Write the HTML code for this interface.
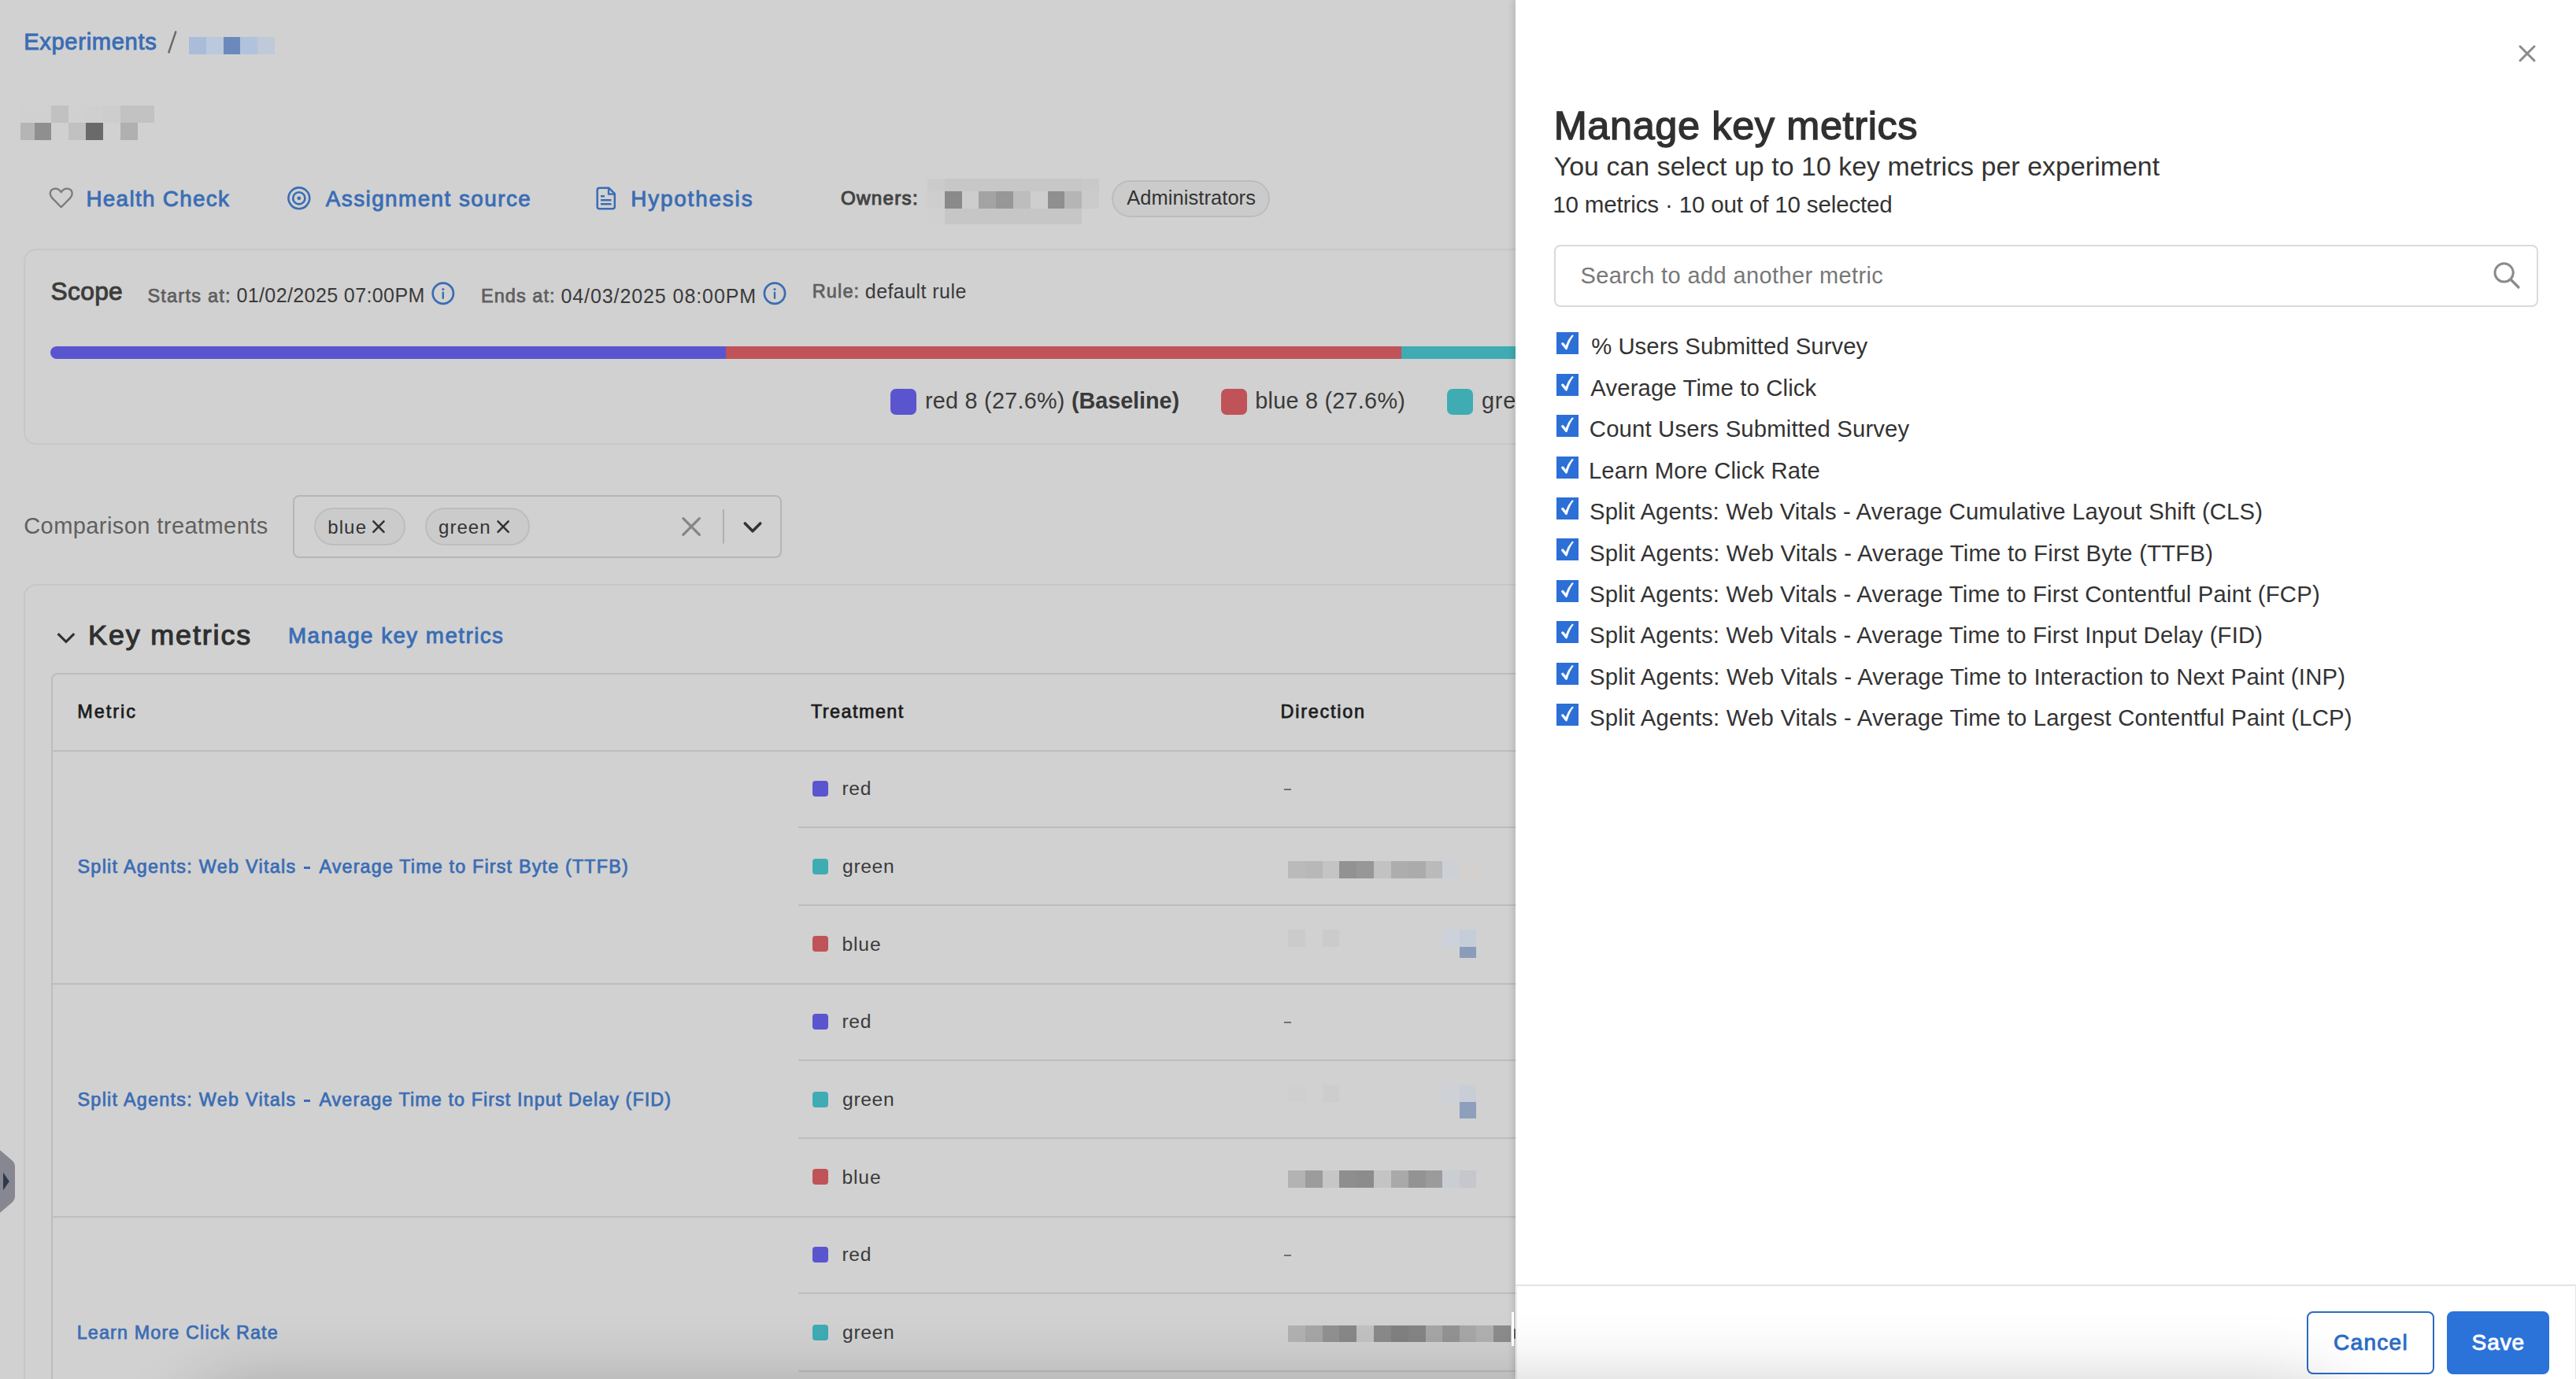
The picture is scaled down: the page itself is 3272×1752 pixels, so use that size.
<!DOCTYPE html><html><head><meta charset="utf-8"><style>
html,body{margin:0;padding:0;}
body{width:3272px;height:1752px;position:relative;overflow:hidden;background:#d1d1d1;font-family:"Liberation Sans",sans-serif;}
.t{position:absolute;white-space:nowrap;}
.b{position:absolute;box-sizing:border-box;}
svg{position:absolute;overflow:visible;}
</style></head><body>
<div class="t " style="left:30.14px;top:38.60px;font-size:29.1px;line-height:29.1px;font-weight:normal;color:#3a6db5;letter-spacing:0.702px;-webkit-text-stroke:0.93px #3a6db5;">Experiments</div>
<svg style="left:0;top:0" width="1" height="1"><line x1="223.2" y1="40.5" x2="214.4" y2="66.5" stroke="#6a6a6a" stroke-width="2.4" stroke-linecap="round"/></svg>
<div class="b" style="left:240px;top:47px;width:21.8px;height:21.6px;background:#a9bcda"></div>
<div class="b" style="left:261.8px;top:47px;width:21.8px;height:21.6px;background:#bbc9dd"></div>
<div class="b" style="left:283.6px;top:47px;width:21.8px;height:21.6px;background:#6b8abb"></div>
<div class="b" style="left:305.4px;top:47px;width:21.8px;height:21.6px;background:#b1c2de"></div>
<div class="b" style="left:327.2px;top:47px;width:21.8px;height:21.6px;background:#c0c9d7"></div>
<div class="b" style="left:26px;top:134px;width:39px;height:22px;background:#d0d0d0"></div>
<div class="b" style="left:65px;top:134px;width:22px;height:22px;background:#c1c1c1"></div>
<div class="b" style="left:87px;top:134px;width:22px;height:22px;background:#d0d0d0"></div>
<div class="b" style="left:109px;top:134px;width:22px;height:22px;background:#cfcfcf"></div>
<div class="b" style="left:131px;top:134px;width:22px;height:22px;background:#cdcdcd"></div>
<div class="b" style="left:153px;top:134px;width:22px;height:22px;background:#c2c2c2"></div>
<div class="b" style="left:175px;top:134px;width:21px;height:22px;background:#c2c2c2"></div>
<div class="b" style="left:26px;top:156px;width:18px;height:22px;background:#b5b5b5"></div>
<div class="b" style="left:44px;top:156px;width:21px;height:22px;background:#8f8f8f"></div>
<div class="b" style="left:65px;top:156px;width:22px;height:22px;background:#d0d0d0"></div>
<div class="b" style="left:87px;top:156px;width:22px;height:22px;background:#c1c1c1"></div>
<div class="b" style="left:109px;top:156px;width:22px;height:22px;background:#6a6a6a"></div>
<div class="b" style="left:131px;top:156px;width:22px;height:22px;background:#d1d1d1"></div>
<div class="b" style="left:153px;top:156px;width:22px;height:22px;background:#b0b0b0"></div>
<div class="b" style="left:175px;top:156px;width:21px;height:22px;background:#d1d1d1"></div>
<svg style="left:0;top:0" width="1" height="1"><path d="M77.7 263.2 L66.3 251.6 C62.2 247.4 63.2 241.2 68.6 239.9 C72.3 239 75.6 241.2 77.7 244.2 C79.8 241.2 83.1 239 86.8 239.9 C92.2 241.2 93.2 247.4 89.1 251.6 Z" fill="none" stroke="#7b7b7b" stroke-width="2.3" stroke-linejoin="round"/></svg>
<div class="t " style="left:109.42px;top:238.59px;font-size:27.8px;line-height:27.8px;font-weight:normal;color:#3a6db5;letter-spacing:1.327px;-webkit-text-stroke:0.89px #3a6db5;">Health Check</div>
<svg style="left:0;top:0" width="1" height="1"><circle cx="379.8" cy="251.8" r="13.4" fill="none" stroke="#3a6db5" stroke-width="2.6"/><circle cx="379.8" cy="251.8" r="7.6" fill="none" stroke="#3a6db5" stroke-width="2.6"/><circle cx="379.8" cy="251.8" r="2.4" fill="#3a6db5"/></svg>
<div class="t " style="left:413.75px;top:239.39px;font-size:27.8px;line-height:27.8px;font-weight:normal;color:#3a6db5;letter-spacing:1.476px;-webkit-text-stroke:0.89px #3a6db5;">Assignment source</div>
<svg style="left:0;top:0" width="1" height="1"><path d="M761.5 238.8 H773.5 L780.8 246.1 V262.5 Q780.8 265.3 778 265.3 H761.5 Q758.7 265.3 758.7 262.5 V241.6 Q758.7 238.8 761.5 238.8 Z" fill="none" stroke="#3a6db5" stroke-width="2.5" stroke-linejoin="round"/><path d="M773 239 V246.6 H780.6" fill="none" stroke="#3a6db5" stroke-width="2.3"/><path d="M763 249.2 H768 M763 254.2 H776.5 M763 259.2 H776.5" stroke="#3a6db5" stroke-width="2.4"/></svg>
<div class="t " style="left:801.22px;top:239.39px;font-size:27.8px;line-height:27.8px;font-weight:normal;color:#3a6db5;letter-spacing:1.871px;-webkit-text-stroke:0.89px #3a6db5;">Hypothesis</div>
<div class="t " style="left:1068.04px;top:239.79px;font-size:24.2px;line-height:24.2px;font-weight:normal;color:#444;letter-spacing:1.266px;-webkit-text-stroke:1.05px #444;">Owners:</div>
<div class="b" style="left:1178px;top:227px;width:22px;height:16px;background:#cbcbcb"></div>
<div class="b" style="left:1200px;top:227px;width:22px;height:16px;background:#c7c7c7"></div>
<div class="b" style="left:1222px;top:227px;width:21px;height:16px;background:#c7c7c7"></div>
<div class="b" style="left:1243px;top:227px;width:22px;height:16px;background:#c7c7c7"></div>
<div class="b" style="left:1265px;top:227px;width:22px;height:16px;background:#c7c7c7"></div>
<div class="b" style="left:1287px;top:227px;width:22px;height:16px;background:#c7c7c7"></div>
<div class="b" style="left:1309px;top:227px;width:22px;height:16px;background:#c7c7c7"></div>
<div class="b" style="left:1331px;top:227px;width:21px;height:16px;background:#c7c7c7"></div>
<div class="b" style="left:1352px;top:227px;width:22px;height:16px;background:#c7c7c7"></div>
<div class="b" style="left:1374px;top:227px;width:22px;height:16px;background:#c9c9c9"></div>
<div class="b" style="left:1178px;top:243px;width:22px;height:22px;background:#cecece"></div>
<div class="b" style="left:1200px;top:243px;width:22px;height:22px;background:#8a8a8a"></div>
<div class="b" style="left:1222px;top:243px;width:21px;height:22px;background:#cdcdcd"></div>
<div class="b" style="left:1243px;top:243px;width:22px;height:22px;background:#a3a3a3"></div>
<div class="b" style="left:1265px;top:243px;width:22px;height:22px;background:#979797"></div>
<div class="b" style="left:1287px;top:243px;width:22px;height:22px;background:#bdbdbd"></div>
<div class="b" style="left:1309px;top:243px;width:22px;height:22px;background:#cecece"></div>
<div class="b" style="left:1331px;top:243px;width:21px;height:22px;background:#8f8f8f"></div>
<div class="b" style="left:1352px;top:243px;width:22px;height:22px;background:#b5b5b5"></div>
<div class="b" style="left:1374px;top:243px;width:22px;height:22px;background:#cbcbcb"></div>
<div class="b" style="left:1178px;top:265px;width:22px;height:20px;background:#d0d0d0"></div>
<div class="b" style="left:1200px;top:265px;width:22px;height:20px;background:#c6c6c6"></div>
<div class="b" style="left:1222px;top:265px;width:21px;height:20px;background:#c6c6c6"></div>
<div class="b" style="left:1243px;top:265px;width:22px;height:20px;background:#c6c6c6"></div>
<div class="b" style="left:1265px;top:265px;width:22px;height:20px;background:#c6c6c6"></div>
<div class="b" style="left:1287px;top:265px;width:22px;height:20px;background:#c6c6c6"></div>
<div class="b" style="left:1309px;top:265px;width:22px;height:20px;background:#c6c6c6"></div>
<div class="b" style="left:1331px;top:265px;width:21px;height:20px;background:#c6c6c6"></div>
<div class="b" style="left:1352px;top:265px;width:22px;height:20px;background:#c6c6c6"></div>
<div class="b" style="left:1412px;top:228.5px;width:201px;height:47px;border:2px solid #bcbcbc;border-radius:24px;background:#cbcbcb"></div>
<div class="t " style="left:1431.30px;top:238.79px;font-size:25.4px;line-height:25.4px;font-weight:normal;color:#333;letter-spacing:0.099px;">Administrators</div>
<div class="b" style="left:30px;top:316px;width:2200px;height:249px;border:2px solid #c7c7c7;border-radius:16px"></div>
<div class="t " style="left:64.58px;top:355.23px;font-size:31.7px;line-height:31.7px;font-weight:normal;color:#3c3c3c;letter-spacing:0.318px;-webkit-text-stroke:1.01px #3c3c3c;">Scope</div>
<div class="t " style="left:187.42px;top:364.88px;font-size:23.5px;line-height:23.5px;font-weight:normal;color:#5f5f5f;letter-spacing:1.225px;-webkit-text-stroke:0.75px #5f5f5f;">Starts at:</div>
<div class="t " style="left:300.40px;top:363.43px;font-size:25px;line-height:25px;font-weight:normal;color:#3a3a3a;letter-spacing:0.400px;">01/02/2025 07:00PM</div>
<svg style="left:0;top:0" width="1" height="1"><circle cx="562.8" cy="372.8" r="13.1" fill="none" stroke="#3a6db3" stroke-width="2.7"/><circle cx="562.8" cy="367.5" r="1.5" fill="#3a6db3"/><path d="M562.8 371.6 V378.8" stroke="#3a6db3" stroke-width="2.4" stroke-linecap="round"/></svg>
<div class="t " style="left:611.00px;top:364.88px;font-size:23.5px;line-height:23.5px;font-weight:normal;color:#5f5f5f;letter-spacing:1.045px;-webkit-text-stroke:0.75px #5f5f5f;">Ends at:</div>
<div class="t " style="left:712.40px;top:363.73px;font-size:25px;line-height:25px;font-weight:normal;color:#3a3a3a;letter-spacing:0.918px;">04/03/2025 08:00PM</div>
<svg style="left:0;top:0" width="1" height="1"><circle cx="984" cy="372.8" r="13.1" fill="none" stroke="#3a6db3" stroke-width="2.7"/><circle cx="984" cy="367.5" r="1.5" fill="#3a6db3"/><path d="M984 371.6 V378.8" stroke="#3a6db3" stroke-width="2.4" stroke-linecap="round"/></svg>
<div class="t " style="left:1031.69px;top:359.18px;font-size:23.5px;line-height:23.5px;font-weight:normal;color:#5f5f5f;letter-spacing:1.147px;-webkit-text-stroke:0.75px #5f5f5f;">Rule:</div>
<div class="t " style="left:1098.80px;top:357.93px;font-size:25px;line-height:25px;font-weight:normal;color:#3a3a3a;letter-spacing:0.436px;">default rule</div>
<div class="b" style="left:64px;top:440px;width:860px;height:16px;background:#5a55cf;border-radius:8px 0 0 8px"></div>
<div class="b" style="left:922px;top:440px;width:858px;height:16px;background:#bf5357"></div>
<div class="b" style="left:1780px;top:440px;width:500px;height:16px;background:#3facb4"></div>
<div class="b" style="left:1130.5px;top:494px;width:33px;height:33px;background:#5a55cf;border-radius:7px"></div>
<div class="t " style="left:1174.93px;top:494.75px;font-size:28.8px;line-height:28.8px;font-weight:normal;color:#3a3a3a;letter-spacing:0.251px;">red 8 (27.6%)</div>
<div class="t " style="left:1361.06px;top:494.75px;font-size:28.8px;line-height:28.8px;font-weight:bold;color:#3a3a3a;letter-spacing:-0.076px;">(Baseline)</div>
<div class="b" style="left:1550.5px;top:494px;width:33px;height:33px;background:#bf5357;border-radius:7px"></div>
<div class="t " style="left:1594.33px;top:494.75px;font-size:28.8px;line-height:28.8px;font-weight:normal;color:#3a3a3a;letter-spacing:0.246px;">blue 8 (27.6%)</div>
<div class="b" style="left:1838px;top:494px;width:33px;height:33px;background:#3facb4;border-radius:7px"></div>
<div class="t " style="left:1882.05px;top:494.75px;font-size:28.8px;line-height:28.8px;font-weight:normal;color:#3a3a3a;letter-spacing:0.742px;">green 8 (27.6%)</div>
<div class="t " style="left:30.25px;top:654.38px;font-size:29px;line-height:29px;font-weight:normal;color:#606060;letter-spacing:0.426px;">Comparison treatments</div>
<div class="b" style="left:372px;top:629px;width:621px;height:79.5px;border:2px solid #b6b6b6;border-radius:8px"></div>
<div class="b" style="left:398.5px;top:645px;width:116.5px;height:48px;border:2px solid #bdbdbd;border-radius:24px;background:#cbcbcb"></div>
<div class="t " style="left:416.14px;top:657.76px;font-size:24px;line-height:24px;font-weight:normal;color:#333;letter-spacing:1.160px;">blue</div>
<svg style="left:0;top:0" width="1" height="1"><path d="M474.3 662.4 L487.5 675.8 M487.5 662.4 L474.3 675.8" stroke="#333" stroke-width="2.6" stroke-linecap="round"/></svg>
<div class="b" style="left:539.5px;top:645px;width:133.5px;height:48px;border:2px solid #bdbdbd;border-radius:24px;background:#cbcbcb"></div>
<div class="t " style="left:557.04px;top:657.76px;font-size:24px;line-height:24px;font-weight:normal;color:#333;letter-spacing:1.050px;">green</div>
<svg style="left:0;top:0" width="1" height="1"><path d="M632.5 662.4 L645.7 675.8 M645.7 662.4 L632.5 675.8" stroke="#333" stroke-width="2.6" stroke-linecap="round"/></svg>
<svg style="left:0;top:0" width="1" height="1"><path d="M867.8 658.7 L888.4 679.3 M888.4 658.7 L867.8 679.3" stroke="#858585" stroke-width="3.2" stroke-linecap="round"/><path d="M918.9 647 V690.5" stroke="#ababab" stroke-width="1.8"/><path d="M946.3 665 L956 674.8 L965.7 665" fill="none" stroke="#333" stroke-width="3.6" stroke-linecap="round" stroke-linejoin="round"/></svg>
<div class="b" style="left:30px;top:742px;width:2400px;height:1200px;border:2px solid #c7c7c7;border-radius:16px"></div>
<svg style="left:0;top:0" width="1" height="1"><path d="M73.6 805.2 L83.9 815.3 L94.2 805.2" fill="none" stroke="#303030" stroke-width="3.2" stroke-linecap="butt" stroke-linejoin="miter"/></svg>
<div class="t " style="left:112.10px;top:790.02px;font-size:35.9px;line-height:35.9px;font-weight:normal;color:#2f2f2f;letter-spacing:1.860px;-webkit-text-stroke:1.15px #2f2f2f;">Key metrics</div>
<div class="t " style="left:366.03px;top:793.87px;font-size:27.7px;line-height:27.7px;font-weight:normal;color:#3a6db5;letter-spacing:1.481px;-webkit-text-stroke:0.89px #3a6db5;">Manage key metrics</div>
<div class="b" style="left:64.5px;top:855px;width:2300px;height:1000px;border:2px solid #bdbdbd;border-radius:8px"></div>
<div class="t " style="left:98.20px;top:893.06px;font-size:23.4px;line-height:23.4px;font-weight:normal;color:#1c1c1c;letter-spacing:2.032px;-webkit-text-stroke:0.75px #1c1c1c;">Metric</div>
<div class="t " style="left:1029.91px;top:893.26px;font-size:23.4px;line-height:23.4px;font-weight:normal;color:#1c1c1c;letter-spacing:1.460px;-webkit-text-stroke:0.75px #1c1c1c;">Treatment</div>
<div class="t " style="left:1626.50px;top:893.26px;font-size:23.4px;line-height:23.4px;font-weight:normal;color:#1c1c1c;letter-spacing:1.791px;-webkit-text-stroke:0.75px #1c1c1c;">Direction</div>
<div class="b" style="left:66px;top:953px;width:2300px;height:2px;background:#bdbdbd"></div>
<div class="t " style="left:98.53px;top:1090.24px;font-size:23.3px;line-height:23.3px;font-weight:normal;color:#3a6db5;letter-spacing:1.309px;-webkit-text-stroke:0.75px #3a6db5;">Split Agents: Web Vitals</div>
<div class="b" style="left:385.8px;top:1101.2px;width:8px;height:2.6px;background:#3a6db5"></div>
<div class="t " style="left:405.38px;top:1090.24px;font-size:23.3px;line-height:23.3px;font-weight:normal;color:#3a6db5;letter-spacing:1.187px;-webkit-text-stroke:0.75px #3a6db5;">Average Time to First Byte (TTFB)</div>
<div class="b" style="left:1032px;top:992.0px;width:20px;height:20px;background:#5a55cf;border-radius:4px"></div>
<div class="t " style="left:1069.40px;top:990.46px;font-size:24.6px;line-height:24.6px;font-weight:normal;color:#3a3a3a;letter-spacing:0.775px;">red</div>
<div class="b" style="left:1631px;top:1002.0px;width:8.6px;height:2.2px;background:#707070"></div>
<div class="b" style="left:1014px;top:1050.2px;width:1300px;height:2px;background:#bdbdbd"></div>
<div class="b" style="left:1032px;top:1090.7px;width:20px;height:20px;background:#3facb4;border-radius:4px"></div>
<div class="t " style="left:1070.02px;top:1089.16px;font-size:24.6px;line-height:24.6px;font-weight:normal;color:#3a3a3a;letter-spacing:0.682px;">green</div>
<div class="b" style="left:1014px;top:1149px;width:1300px;height:2px;background:#bdbdbd"></div>
<div class="b" style="left:1032px;top:1189.4px;width:20px;height:20px;background:#bf5357;border-radius:4px"></div>
<div class="t " style="left:1069.40px;top:1187.86px;font-size:24.6px;line-height:24.6px;font-weight:normal;color:#3a3a3a;letter-spacing:0.904px;">blue</div>
<div class="b" style="left:66px;top:1249px;width:2300px;height:2px;background:#bdbdbd"></div>
<div class="t " style="left:98.53px;top:1386.24px;font-size:23.3px;line-height:23.3px;font-weight:normal;color:#3a6db5;letter-spacing:1.309px;-webkit-text-stroke:0.75px #3a6db5;">Split Agents: Web Vitals</div>
<div class="b" style="left:385.8px;top:1397.2px;width:8px;height:2.6px;background:#3a6db5"></div>
<div class="t " style="left:405.38px;top:1386.24px;font-size:23.3px;line-height:23.3px;font-weight:normal;color:#3a6db5;letter-spacing:1.100px;-webkit-text-stroke:0.75px #3a6db5;">Average Time to First Input Delay (FID)</div>
<div class="b" style="left:1032px;top:1288.0px;width:20px;height:20px;background:#5a55cf;border-radius:4px"></div>
<div class="t " style="left:1069.40px;top:1286.46px;font-size:24.6px;line-height:24.6px;font-weight:normal;color:#3a3a3a;letter-spacing:0.775px;">red</div>
<div class="b" style="left:1631px;top:1298.0px;width:8.6px;height:2.2px;background:#707070"></div>
<div class="b" style="left:1014px;top:1346.2px;width:1300px;height:2px;background:#bdbdbd"></div>
<div class="b" style="left:1032px;top:1386.7px;width:20px;height:20px;background:#3facb4;border-radius:4px"></div>
<div class="t " style="left:1070.02px;top:1385.16px;font-size:24.6px;line-height:24.6px;font-weight:normal;color:#3a3a3a;letter-spacing:0.682px;">green</div>
<div class="b" style="left:1014px;top:1445px;width:1300px;height:2px;background:#bdbdbd"></div>
<div class="b" style="left:1032px;top:1485.4px;width:20px;height:20px;background:#bf5357;border-radius:4px"></div>
<div class="t " style="left:1069.40px;top:1483.86px;font-size:24.6px;line-height:24.6px;font-weight:normal;color:#3a3a3a;letter-spacing:0.904px;">blue</div>
<div class="b" style="left:66px;top:1545px;width:2300px;height:2px;background:#bdbdbd"></div>
<div class="t " style="left:97.71px;top:1682.24px;font-size:23.3px;line-height:23.3px;font-weight:normal;color:#3a6db5;letter-spacing:1.162px;-webkit-text-stroke:0.75px #3a6db5;">Learn More Click Rate</div>
<div class="b" style="left:1032px;top:1584.0px;width:20px;height:20px;background:#5a55cf;border-radius:4px"></div>
<div class="t " style="left:1069.40px;top:1582.46px;font-size:24.6px;line-height:24.6px;font-weight:normal;color:#3a3a3a;letter-spacing:0.775px;">red</div>
<div class="b" style="left:1631px;top:1594.0px;width:8.6px;height:2.2px;background:#707070"></div>
<div class="b" style="left:1014px;top:1642.2px;width:1300px;height:2px;background:#bdbdbd"></div>
<div class="b" style="left:1032px;top:1682.7px;width:20px;height:20px;background:#3facb4;border-radius:4px"></div>
<div class="t " style="left:1070.02px;top:1681.16px;font-size:24.6px;line-height:24.6px;font-weight:normal;color:#3a3a3a;letter-spacing:0.682px;">green</div>
<div class="b" style="left:1014px;top:1741px;width:1300px;height:2px;background:#bdbdbd"></div>
<div class="b" style="left:1032px;top:1781.4px;width:20px;height:20px;background:#bf5357;border-radius:4px"></div>
<div class="t " style="left:1069.40px;top:1779.86px;font-size:24.6px;line-height:24.6px;font-weight:normal;color:#3a3a3a;letter-spacing:0.904px;">blue</div>
<div class="b" style="left:1636.1px;top:1094px;width:21.8px;height:22px;background:#bababa"></div>
<div class="b" style="left:1657.9px;top:1094px;width:21.8px;height:22px;background:#b8b8b8"></div>
<div class="b" style="left:1679.7px;top:1094px;width:21.5px;height:22px;background:#c4c4c4"></div>
<div class="b" style="left:1701.2px;top:1094px;width:21.8px;height:22px;background:#929292"></div>
<div class="b" style="left:1723.0px;top:1094px;width:21.8px;height:22px;background:#979797"></div>
<div class="b" style="left:1744.8px;top:1094px;width:22.4px;height:22px;background:#c2c2c2"></div>
<div class="b" style="left:1767.2px;top:1094px;width:21.8px;height:22px;background:#adadad"></div>
<div class="b" style="left:1789.0px;top:1094px;width:21.7px;height:22px;background:#ababab"></div>
<div class="b" style="left:1810.7px;top:1094px;width:21.2px;height:22px;background:#bababa"></div>
<div class="b" style="left:1831.9px;top:1094px;width:21.7px;height:22px;background:#cdd0d4"></div>
<div class="b" style="left:1853.6px;top:1094px;width:21.8px;height:22px;background:#d3d0ce"></div>
<div class="b" style="left:1636.1px;top:1181px;width:21.8px;height:22px;background:#cbcbcb"></div>
<div class="b" style="left:1679.7px;top:1181px;width:21.5px;height:22px;background:#cbcbcb"></div>
<div class="b" style="left:1831.9px;top:1181px;width:21.7px;height:22px;background:#cdd1d9"></div>
<div class="b" style="left:1853.6px;top:1181px;width:21.8px;height:22px;background:#c5cdd8"></div>
<div class="b" style="left:1853.6px;top:1203px;width:21.8px;height:14px;background:#8b9cbb"></div>
<div class="b" style="left:1636.1px;top:1378px;width:21.8px;height:22px;background:#cfcfcf"></div>
<div class="b" style="left:1679.7px;top:1378px;width:21.5px;height:22px;background:#cdcdcd"></div>
<div class="b" style="left:1831.9px;top:1378px;width:21.7px;height:22px;background:#ced1d6"></div>
<div class="b" style="left:1853.6px;top:1378px;width:21.8px;height:22px;background:#c9cdd6"></div>
<div class="b" style="left:1853.6px;top:1400px;width:21.8px;height:21px;background:#8e9fbc"></div>
<div class="b" style="left:1636.1px;top:1487.4px;width:21.8px;height:21.5px;background:#b3b3b3"></div>
<div class="b" style="left:1657.9px;top:1487.4px;width:21.8px;height:21.5px;background:#9c9c9c"></div>
<div class="b" style="left:1679.7px;top:1487.4px;width:21.5px;height:21.5px;background:#c6c6c6"></div>
<div class="b" style="left:1701.2px;top:1487.4px;width:21.8px;height:21.5px;background:#8e8e8e"></div>
<div class="b" style="left:1723.0px;top:1487.4px;width:21.8px;height:21.5px;background:#8c8c8c"></div>
<div class="b" style="left:1744.8px;top:1487.4px;width:22.4px;height:21.5px;background:#c4c4c4"></div>
<div class="b" style="left:1767.2px;top:1487.4px;width:21.8px;height:21.5px;background:#a9a9a9"></div>
<div class="b" style="left:1789.0px;top:1487.4px;width:21.7px;height:21.5px;background:#939393"></div>
<div class="b" style="left:1810.7px;top:1487.4px;width:21.2px;height:21.5px;background:#9b9b9b"></div>
<div class="b" style="left:1831.9px;top:1487.4px;width:21.7px;height:21.5px;background:#c9ced3"></div>
<div class="b" style="left:1853.6px;top:1487.4px;width:21.8px;height:21.5px;background:#c5c7cc"></div>
<div class="b" style="left:1636.1px;top:1683.5px;width:21.8px;height:21.5px;background:#b2b2b2"></div>
<div class="b" style="left:1657.9px;top:1683.5px;width:21.8px;height:21.5px;background:#a6a6a6"></div>
<div class="b" style="left:1679.7px;top:1683.5px;width:21.5px;height:21.5px;background:#919191"></div>
<div class="b" style="left:1701.2px;top:1683.5px;width:21.8px;height:21.5px;background:#888888"></div>
<div class="b" style="left:1723.0px;top:1683.5px;width:21.8px;height:21.5px;background:#c2c2c2"></div>
<div class="b" style="left:1744.8px;top:1683.5px;width:22.4px;height:21.5px;background:#8a8a8a"></div>
<div class="b" style="left:1767.2px;top:1683.5px;width:21.8px;height:21.5px;background:#818181"></div>
<div class="b" style="left:1789.0px;top:1683.5px;width:21.7px;height:21.5px;background:#858585"></div>
<div class="b" style="left:1810.7px;top:1683.5px;width:21.2px;height:21.5px;background:#a6a6a6"></div>
<div class="b" style="left:1831.9px;top:1683.5px;width:21.7px;height:21.5px;background:#939393"></div>
<div class="b" style="left:1853.6px;top:1683.5px;width:21.8px;height:21.5px;background:#a7a7a7"></div>
<div class="b" style="left:1875.4px;top:1683.5px;width:21.8px;height:21.5px;background:#b0b0b0"></div>
<div class="b" style="left:1897.2px;top:1683.5px;width:21.8px;height:21.5px;background:#8c8c8c"></div>
<svg style="left:0;top:0" width="1" height="1"><path d="M-4 1458 L15 1474 Q19 1477.5 19 1482 V1520 Q19 1524.5 15 1528 L-4 1544 Z" fill="#878791"/><path d="M4 1489.6 L11.8 1501 L4 1512.3 Z" fill="#2d3a4b"/></svg>
<div class="b" style="left:260px;top:1790px;width:2700px;height:120px;border-radius:60px;box-shadow:0 0 90px 30px rgba(0,0,0,0.22);z-index:50"></div>
<div class="b" style="left:1925px;top:0;width:1347px;height:1752px;background:#fff;box-shadow:-3px 0 8px rgba(0,0,0,0.12);z-index:10">
</div>
<div class="b" style="left:1925.5px;top:1632px;width:1.5px;height:120px;background:#e6e6e6;z-index:11"></div>
<div style="position:absolute;left:0;top:0;width:3272px;height:1752px;z-index:20">
<svg style="left:0;top:0" width="1" height="1"><path d="M3201 59 L3219 77 M3219 59 L3201 77" stroke="#8a8a8a" stroke-width="3" stroke-linecap="round"/></svg>
<div class="t " style="left:1973.66px;top:134.73px;font-size:50.5px;line-height:50.5px;font-weight:normal;color:#303030;letter-spacing:0.590px;-webkit-text-stroke:1.4px #303030;">Manage key metrics</div>
<div class="t " style="left:1973.65px;top:195.49px;font-size:33.9px;line-height:33.9px;font-weight:normal;color:#333;letter-spacing:0.045px;">You can select up to 10 key metrics per experiment</div>
<div class="t " style="left:1972.18px;top:245.08px;font-size:29.6px;line-height:29.6px;font-weight:normal;color:#333;letter-spacing:-0.179px;">10 metrics · 10 out of 10 selected</div>
<div class="b" style="left:1973.5px;top:310.5px;width:1250px;height:79px;border:2px solid #dadada;border-radius:8px"></div>
<div class="t " style="left:2007.49px;top:335.59px;font-size:29px;line-height:29px;font-weight:normal;color:#777;letter-spacing:0.381px;">Search to add another metric</div>
<svg style="left:0;top:0" width="1" height="1"><circle cx="3180.6" cy="346.4" r="11.6" fill="none" stroke="#8a8a8a" stroke-width="3"/><path d="M3189 355 L3199 365" stroke="#8a8a8a" stroke-width="3.2" stroke-linecap="round"/></svg>
<div class="b" style="left:1977px;top:422.1px;width:28px;height:28px;background:#2c6fd6"></div>
<svg style="left:0;top:0" width="1" height="1"><path d="M1983.3 437.1 Q1983.2 435.5 1984.8 435.3 Q1985.7 435.3 1986.3 436.1 L1988.9 439.5 Q1991.5 431.6 1996.6 426.1 Q1997.6 425.4 1998.5 426.5 Q1993.5 432.6 1990.6 443.1 Q1990.0 444.5 1989.0 444.1 Z" fill="#fff" stroke="#fff" stroke-width="0.5" stroke-linejoin="round"/></svg>
<div class="t " style="left:2021.17px;top:425.33px;font-size:29.3px;line-height:29.3px;font-weight:normal;color:#333;letter-spacing:0.039px;">% Users Submitted Survey</div>
<div class="b" style="left:1977px;top:474.6px;width:28px;height:28px;background:#2c6fd6"></div>
<svg style="left:0;top:0" width="1" height="1"><path d="M1983.3 489.6 Q1983.2 487.9 1984.8 487.8 Q1985.7 487.8 1986.3 488.6 L1988.9 491.9 Q1991.5 484.1 1996.6 478.6 Q1997.6 477.9 1998.5 478.9 Q1993.5 485.1 1990.6 495.6 Q1990.0 496.9 1989.0 496.6 Z" fill="#fff" stroke="#fff" stroke-width="0.5" stroke-linejoin="round"/></svg>
<div class="t " style="left:2020.30px;top:477.78px;font-size:29.3px;line-height:29.3px;font-weight:normal;color:#333;letter-spacing:0.125px;">Average Time to Click</div>
<div class="b" style="left:1977px;top:527.0px;width:28px;height:28px;background:#2c6fd6"></div>
<svg style="left:0;top:0" width="1" height="1"><path d="M1983.3 542.0 Q1983.2 540.4 1984.8 540.2 Q1985.7 540.2 1986.3 541.0 L1988.9 544.4 Q1991.5 536.5 1996.6 531.0 Q1997.6 530.3 1998.5 531.4 Q1993.5 537.5 1990.6 548.0 Q1990.0 549.4 1989.0 549.0 Z" fill="#fff" stroke="#fff" stroke-width="0.5" stroke-linejoin="round"/></svg>
<div class="t " style="left:2018.84px;top:530.23px;font-size:29.3px;line-height:29.3px;font-weight:normal;color:#333;letter-spacing:0.155px;">Count Users Submitted Survey</div>
<div class="b" style="left:1977px;top:579.5px;width:28px;height:28px;background:#2c6fd6"></div>
<svg style="left:0;top:0" width="1" height="1"><path d="M1983.3 594.5 Q1983.2 592.9 1984.8 592.7 Q1985.7 592.7 1986.3 593.5 L1988.9 596.9 Q1991.5 589.0 1996.6 583.5 Q1997.6 582.8 1998.5 583.9 Q1993.5 590.0 1990.6 600.5 Q1990.0 601.9 1989.0 601.5 Z" fill="#fff" stroke="#fff" stroke-width="0.5" stroke-linejoin="round"/></svg>
<div class="t " style="left:2017.96px;top:582.68px;font-size:29.3px;line-height:29.3px;font-weight:normal;color:#333;letter-spacing:0.114px;">Learn More Click Rate</div>
<div class="b" style="left:1977px;top:631.9px;width:28px;height:28px;background:#2c6fd6"></div>
<svg style="left:0;top:0" width="1" height="1"><path d="M1983.3 646.9 Q1983.2 645.3 1984.8 645.1 Q1985.7 645.1 1986.3 645.9 L1988.9 649.3 Q1991.5 641.4 1996.6 635.9 Q1997.6 635.2 1998.5 636.3 Q1993.5 642.4 1990.6 652.9 Q1990.0 654.3 1989.0 653.9 Z" fill="#fff" stroke="#fff" stroke-width="0.5" stroke-linejoin="round"/></svg>
<div class="t " style="left:2018.98px;top:635.13px;font-size:29.3px;line-height:29.3px;font-weight:normal;color:#333;letter-spacing:0.157px;">Split Agents: Web Vitals - Average Cumulative Layout Shift (CLS)</div>
<div class="b" style="left:1977px;top:684.4px;width:28px;height:28px;background:#2c6fd6"></div>
<svg style="left:0;top:0" width="1" height="1"><path d="M1983.3 699.4 Q1983.2 697.8 1984.8 697.6 Q1985.7 697.6 1986.3 698.4 L1988.9 701.8 Q1991.5 693.9 1996.6 688.4 Q1997.6 687.6 1998.5 688.8 Q1993.5 694.9 1990.6 705.4 Q1990.0 706.8 1989.0 706.4 Z" fill="#fff" stroke="#fff" stroke-width="0.5" stroke-linejoin="round"/></svg>
<div class="t " style="left:2018.98px;top:687.58px;font-size:29.3px;line-height:29.3px;font-weight:normal;color:#333;letter-spacing:0.205px;">Split Agents: Web Vitals - Average Time to First Byte (TTFB)</div>
<div class="b" style="left:1977px;top:736.8px;width:28px;height:28px;background:#2c6fd6"></div>
<svg style="left:0;top:0" width="1" height="1"><path d="M1983.3 751.8 Q1983.2 750.2 1984.8 750.0 Q1985.7 750.0 1986.3 750.8 L1988.9 754.2 Q1991.5 746.3 1996.6 740.8 Q1997.6 740.1 1998.5 741.2 Q1993.5 747.3 1990.6 757.8 Q1990.0 759.2 1989.0 758.8 Z" fill="#fff" stroke="#fff" stroke-width="0.5" stroke-linejoin="round"/></svg>
<div class="t " style="left:2018.98px;top:740.03px;font-size:29.3px;line-height:29.3px;font-weight:normal;color:#333;letter-spacing:0.180px;">Split Agents: Web Vitals - Average Time to First Contentful Paint (FCP)</div>
<div class="b" style="left:1977px;top:789.2px;width:28px;height:28px;background:#2c6fd6"></div>
<svg style="left:0;top:0" width="1" height="1"><path d="M1983.3 804.2 Q1983.2 802.6 1984.8 802.5 Q1985.7 802.5 1986.3 803.2 L1988.9 806.6 Q1991.5 798.8 1996.6 793.2 Q1997.6 792.5 1998.5 793.6 Q1993.5 799.8 1990.6 810.2 Q1990.0 811.6 1989.0 811.2 Z" fill="#fff" stroke="#fff" stroke-width="0.5" stroke-linejoin="round"/></svg>
<div class="t " style="left:2018.98px;top:792.48px;font-size:29.3px;line-height:29.3px;font-weight:normal;color:#333;letter-spacing:0.180px;">Split Agents: Web Vitals - Average Time to First Input Delay (FID)</div>
<div class="b" style="left:1977px;top:841.7px;width:28px;height:28px;background:#2c6fd6"></div>
<svg style="left:0;top:0" width="1" height="1"><path d="M1983.3 856.7 Q1983.2 855.1 1984.8 854.9 Q1985.7 854.9 1986.3 855.7 L1988.9 859.1 Q1991.5 851.2 1996.6 845.7 Q1997.6 845.0 1998.5 846.1 Q1993.5 852.2 1990.6 862.7 Q1990.0 864.1 1989.0 863.7 Z" fill="#fff" stroke="#fff" stroke-width="0.5" stroke-linejoin="round"/></svg>
<div class="t " style="left:2018.98px;top:844.93px;font-size:29.3px;line-height:29.3px;font-weight:normal;color:#333;letter-spacing:0.214px;">Split Agents: Web Vitals - Average Time to Interaction to Next Paint (INP)</div>
<div class="b" style="left:1977px;top:894.2px;width:28px;height:28px;background:#2c6fd6"></div>
<svg style="left:0;top:0" width="1" height="1"><path d="M1983.3 909.2 Q1983.2 907.6 1984.8 907.4 Q1985.7 907.4 1986.3 908.2 L1988.9 911.6 Q1991.5 903.7 1996.6 898.2 Q1997.6 897.5 1998.5 898.6 Q1993.5 904.7 1990.6 915.2 Q1990.0 916.6 1989.0 916.2 Z" fill="#fff" stroke="#fff" stroke-width="0.5" stroke-linejoin="round"/></svg>
<div class="t " style="left:2018.98px;top:897.38px;font-size:29.3px;line-height:29.3px;font-weight:normal;color:#333;letter-spacing:0.198px;">Split Agents: Web Vitals - Average Time to Largest Contentful Paint (LCP)</div>
<div class="b" style="left:1925px;top:1632px;width:1347px;height:2px;background:#e3e3e3"></div>
<div class="b" style="left:3270.5px;top:1633px;width:1.5px;height:120px;background:#e6e6e6"></div>
<div class="b" style="left:2930px;top:1666px;width:162px;height:80px;border:2px solid #2a6cc4;border-radius:8px"></div>
<div class="t " style="left:2964.05px;top:1692.42px;font-size:28px;line-height:28px;font-weight:normal;color:#2a6cc4;letter-spacing:1.288px;-webkit-text-stroke:0.9px #2a6cc4;">Cancel</div>
<div class="b" style="left:3108px;top:1666px;width:130px;height:80px;background:#2b72d9;border-radius:8px"></div>
<div class="t " style="left:3139.59px;top:1692.42px;font-size:28px;line-height:28px;font-weight:normal;color:#fff;letter-spacing:0.927px;-webkit-text-stroke:0.9px #fff;">Save</div>
</div>
<div class="b" style="left:1920px;top:1667px;width:3px;height:43px;background:#fff;z-index:60"></div>
<div class="b" style="left:1923.3px;top:1688px;width:1.7px;height:13px;background:#555;border-radius:1px;z-index:60"></div>
</body></html>
